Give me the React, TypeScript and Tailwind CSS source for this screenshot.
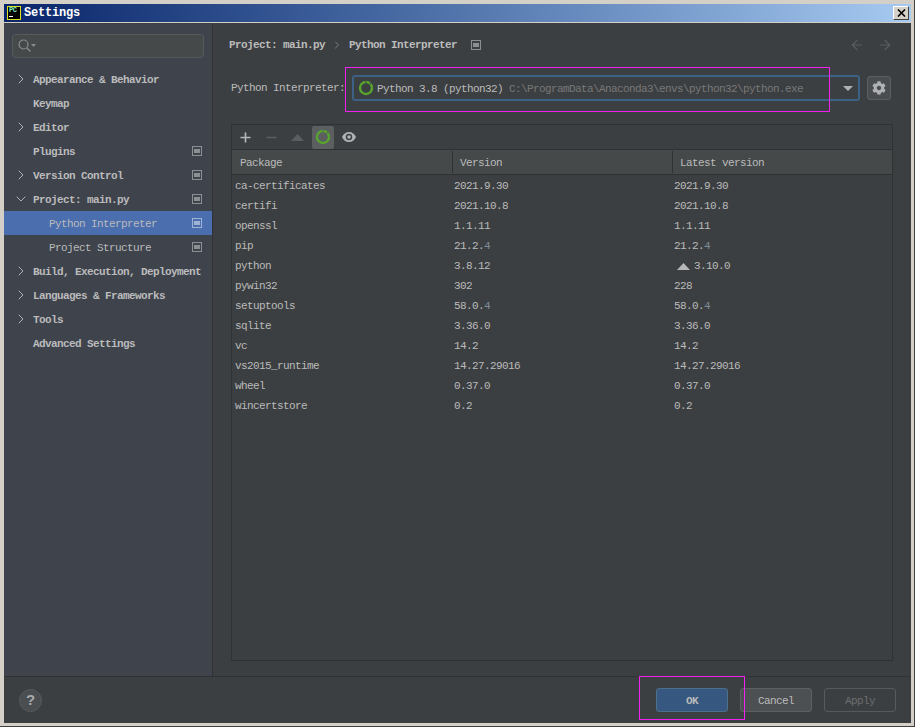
import { ChevronDown, ChevronRight, Plus, Minus, ArrowLeft, ArrowRight } from "lucide-react";
import { FaCog } from "react-icons/fa";

const navItems = [
  { label: "Appearance & Behavior", arrow: "right" },
  { label: "Keymap" },
  { label: "Editor", arrow: "right" },
  { label: "Plugins", badge: true },
  { label: "Version Control", arrow: "right", badge: true },
  { label: "Project: main.py", arrow: "down", badge: true },
  { label: "Python Interpreter", sub: true, selected: true, badge: true },
  { label: "Project Structure", sub: true, badge: true },
  { label: "Build, Execution, Deployment", arrow: "right" },
  { label: "Languages & Frameworks", arrow: "right" },
  { label: "Tools", arrow: "right" },
  { label: "Advanced Settings" },
];

const packages = [
  ["ca-certificates", "2021.9.30", "2021.9.30"],
  ["certifi", "2021.10.8", "2021.10.8"],
  ["openssl", "1.1.11", "1.1.11"],
  ["pip", "21.2.4", "21.2.4"],
  ["python", "3.8.12", "3.10.0"],
  ["pywin32", "302", "228"],
  ["setuptools", "58.0.4", "58.0.4"],
  ["sqlite", "3.36.0", "3.36.0"],
  ["vc", "14.2", "14.2"],
  ["vs2015_runtime", "14.27.29016", "14.27.29016"],
  ["wheel", "0.37.0", "0.37.0"],
  ["wincertstore", "0.2", "0.2"],
];

function ProjectBadge({ light }: { light?: boolean }) {
  return (
    <svg width="10" height="10" viewBox="0 0 10 10" className={light ? "text-[#9fb2d6]" : "text-[#8b8f92]"}>
      <rect x="0.5" y="0.5" width="9" height="9" fill="none" stroke="currentColor" />
      <rect x="2" y="3" width="6" height="4" fill="currentColor" />
    </svg>
  );
}

function GreenRing({ size }: { size: number }) {
  return (
    <svg width={size} height={size} viewBox="0 0 16 16">
      <circle cx="8" cy="8" r="6" fill="none" stroke="#57a52f" strokeWidth="2.4" strokeDasharray="27 0.8 4 0.8 4 1.1" />
    </svg>
  );
}

function Version({ value }: { value: string }) {
  // the last digit renders dimmer on a couple of rows
  if (value.endsWith(".2.4") || value.endsWith(".0.4")) {
    return (
      <span>
        {value.slice(0, -1)}
        <span className="text-[#7f8c96]">{value.slice(-1)}</span>
      </span>
    );
  }
  return <span>{value}</span>;
}

export default function App() {
  return (
    <div className="relative flex h-[727px] w-[915px] flex-col overflow-hidden border-r border-b border-[#404040] bg-[#d4d0c8] pt-1 pr-[3px] pb-[3px] pl-1 font-['Liberation_Mono',monospace] text-[11px] tracking-[-0.6px] text-[#bbbbbb]">
      {/* title bar */}
      <div className="flex h-[18px] shrink-0 items-center bg-gradient-to-r from-[#0a246a] to-[#a6caf0] pl-[3px] pr-[2px]">
        <div className="flex h-[14px] w-[14px] flex-col border border-[#d8e020] bg-black pl-px">
          <span className="text-[7px] leading-[7px] font-bold tracking-[-0.5px] text-[#7ff0c0]">PC</span>
          <span className="mt-[2px] h-px w-[4px] bg-white" />
        </div>
        <span className="ml-[3px] text-[12px] font-bold tracking-[-0.2px] text-white">Settings</span>
        <div className="ml-auto flex h-[14px] w-[16px] items-center justify-center border border-t-white border-l-white border-r-[#404040] border-b-[#404040] bg-[#d4d0c8]">
          <svg width="9" height="8" viewBox="0 0 9 8">
            <path d="M1 0.5 L8 7.5 M8 0.5 L1 7.5" stroke="#000" strokeWidth="1.6" />
          </svg>
        </div>
      </div>

      <div className="mt-px flex min-h-0 flex-1 flex-col border-t border-[#3c3f41] bg-[#3c3f41]">
        <div className="flex min-h-0 flex-1">
          {/* sidebar */}
          <aside className="flex w-[209px] shrink-0 flex-col border-r border-[#2f3133] bg-[#3e434c]">
            <div className="mx-2 mt-[10px] flex h-6 items-center gap-px rounded-[3px] border border-[#565a5c] bg-[#45494a] pl-[5px]">
              <svg width="18" height="14" viewBox="0 0 18 14" fill="none" stroke="#8a8d8f" strokeWidth="1.2">
                <circle cx="5.5" cy="5.5" r="4.5" />
                <path d="M9 9 L12.5 12.5" />
                <path d="M13 5 H18 L15.5 8 Z" fill="#8a8d8f" stroke="none" />
              </svg>
            </div>
            <nav className="mt-[9px] flex flex-col">
              {navItems.map((item) => (
                <div
                  key={item.label}
                  className={`flex h-6 items-center pr-[10px] ${item.selected ? "bg-[#4b6eaf]" : ""}`}
                >
                  <span className="flex w-[29px] shrink-0 items-center justify-end pr-1">
                    {item.arrow === "right" && <ChevronRight size={16} strokeWidth={1.5} className="text-[#afb1b3]" />}
                    {item.arrow === "down" && <ChevronDown size={16} strokeWidth={1.5} className="text-[#afb1b3]" />}
                  </span>
                  <span className={`whitespace-nowrap pt-[2px] ${item.sub ? "ml-4" : "font-bold"}`}>{item.label}</span>
                  {item.badge && (
                    <span className="ml-auto flex">
                      <ProjectBadge light={item.selected} />
                    </span>
                  )}
                </div>
              ))}
            </nav>
          </aside>

          {/* main panel */}
          <main className="flex min-w-0 flex-1 flex-col pr-[18px] pl-[18px]">
            <div className="-ml-[2px] flex h-[21px] shrink-0 items-center pt-[21px]">
              <span className="font-bold">Project: main.py</span>
              <ChevronRight size={12} strokeWidth={1.5} className="mx-[6px] text-[#8d9093]" />
              <span className="font-bold">Python Interpreter</span>
              <span className="ml-[14px] flex">
                <ProjectBadge />
              </span>
              <span className="ml-auto flex items-center gap-[12px] text-[#5b5e60]">
                <ArrowLeft size={16} strokeWidth={1.8} />
                <ArrowRight size={16} strokeWidth={1.8} />
              </span>
            </div>

            <div className="mt-[30px] flex h-[26px] shrink-0 items-center">
              <span className="w-[121px] shrink-0">Python Interpreter:</span>
              <div className="flex h-[26px] w-[508px] items-center rounded-[3px] border-2 border-[#3d6185] bg-[#3c3f41] pl-1">
                <GreenRing size={16} />
                <span className="ml-[3px] whitespace-nowrap pt-[2px]">
                  Python 3.8 (python32) <span className="text-[#787878]">C:\ProgramData\Anaconda3\envs\python32\python.exe</span>
                </span>
                <svg width="10" height="5" viewBox="0 0 10 5" className="mr-[5px] ml-auto">
                  <path d="M0 0 H10 L5 5 Z" fill="#afb1b3" />
                </svg>
              </div>
              <div className="ml-[7px] flex h-6 w-6 items-center justify-center rounded-[3px] border border-[#5e6060] bg-[#4a4d50]">
                <FaCog size={14} className="text-[#afb1b3]" />
              </div>
            </div>

            {/* packages table */}
            <div className="mt-[23px] flex h-[537px] w-[662px] flex-col border border-[#2f3133]">
              <div className="flex h-[25px] shrink-0 items-center border-b border-[#2f3133] pl-[2px]">
                <span className="flex h-[23px] w-[23px] items-center justify-center">
                  <Plus size={15} strokeWidth={2.6} className="text-[#b5b7b9]" />
                </span>
                <span className="ml-[3px] flex h-[23px] w-[23px] items-center justify-center">
                  <Minus size={15} strokeWidth={2.4} className="text-[#5b5e60]" />
                </span>
                <span className="ml-[3px] flex h-[23px] w-[23px] items-center justify-center">
                  <svg width="13" height="7" viewBox="0 0 13 7">
                    <path d="M6.5 0 L13 7 H0 Z" fill="#5b5e60" />
                  </svg>
                </span>
                <span className="ml-[3px] flex h-[23px] w-[22px] items-center justify-center rounded-[2px] bg-[#5b5f60]">
                  <GreenRing size={16} />
                </span>
                <span className="ml-[3px] flex h-[23px] w-[23px] items-center justify-center">
                  <svg width="14" height="10" viewBox="0 0 14 10">
                    <path
                      fillRule="evenodd"
                      d="M7 0 C10.2 0 12.8 2 14 5 C12.8 8 10.2 10 7 10 C3.8 10 1.2 8 0 5 C1.2 2 3.8 0 7 0 Z M7 1.8 A3.2 3.2 0 1 0 7 8.2 A3.2 3.2 0 1 0 7 1.8 Z"
                      fill="#afb1b3"
                    />
                    <circle cx="7" cy="5" r="1.8" fill="#afb1b3" />
                  </svg>
                </span>
              </div>
              <div className="grid h-[25px] shrink-0 grid-cols-[220px_220px_1fr] items-center border-b border-[#2f3133] bg-[#45494a]">
                <span className="pl-2 pt-[2px]">Package</span>
                <span className="flex h-[22px] items-center border-l border-[#2f3133] pl-[7px] pt-[2px]">Version</span>
                <span className="flex h-[22px] items-center border-l border-[#2f3133] pl-[7px] pt-[2px]">Latest version</span>
              </div>
              <div className="pt-px">
                {packages.map(([name, version, latest]) => (
                  <div key={name} className="grid h-5 grid-cols-[220px_220px_1fr] items-center">
                    <span className="pl-[3px]">{name}</span>
                    <span className="pl-[2px]">
                      <Version value={version} />
                    </span>
                    <span className="flex items-center pl-[2px]">
                      {name === "python" && (
                        <svg width="13" height="7" viewBox="0 0 13 7" className="mr-1 ml-[3px]">
                          <path d="M6.5 0 L13 7 H0 Z" fill="#b5b7b9" />
                        </svg>
                      )}
                      <Version value={latest} />
                    </span>
                  </div>
                ))}
              </div>
            </div>
          </main>
        </div>

        {/* footer */}
        <footer className="flex h-[47px] shrink-0 items-center border-t border-[#2f3133] pr-[15px] pl-[15px]">
          <div className="flex h-[23px] w-[23px] items-center justify-center rounded-full border border-[#565a5c] bg-[#4a4e50] font-['Liberation_Sans',sans-serif] text-[15px] font-bold tracking-normal text-[#a8aaac]">
            ?
          </div>
          <div className="ml-auto flex gap-3">
            <button className="flex h-6 w-[72px] items-center justify-center rounded-[3px] border border-[#4c708c] bg-[#365880] pt-[2px] font-bold text-[#bbbbbb]">
              OK
            </button>
            <button className="flex h-6 w-[72px] items-center justify-center rounded-[3px] border border-[#5e6060] bg-[#4c5052] pt-[2px]">
              Cancel
            </button>
            <button className="flex h-6 w-[72px] items-center justify-center rounded-[3px] border border-[#565a5c] pt-[2px] text-[#6c6e70]">
              Apply
            </button>
          </div>
        </footer>
      </div>

      {/* magenta annotation boxes drawn over the screenshot */}
      <div className="pointer-events-none absolute top-[67px] left-[345px] z-10 h-[45px] w-[485px] border border-[#f020f0]" />
      <div className="pointer-events-none absolute top-[676px] left-[639px] z-10 h-[44px] w-[106px] border border-[#f020f0]" />
    </div>
  );
}
